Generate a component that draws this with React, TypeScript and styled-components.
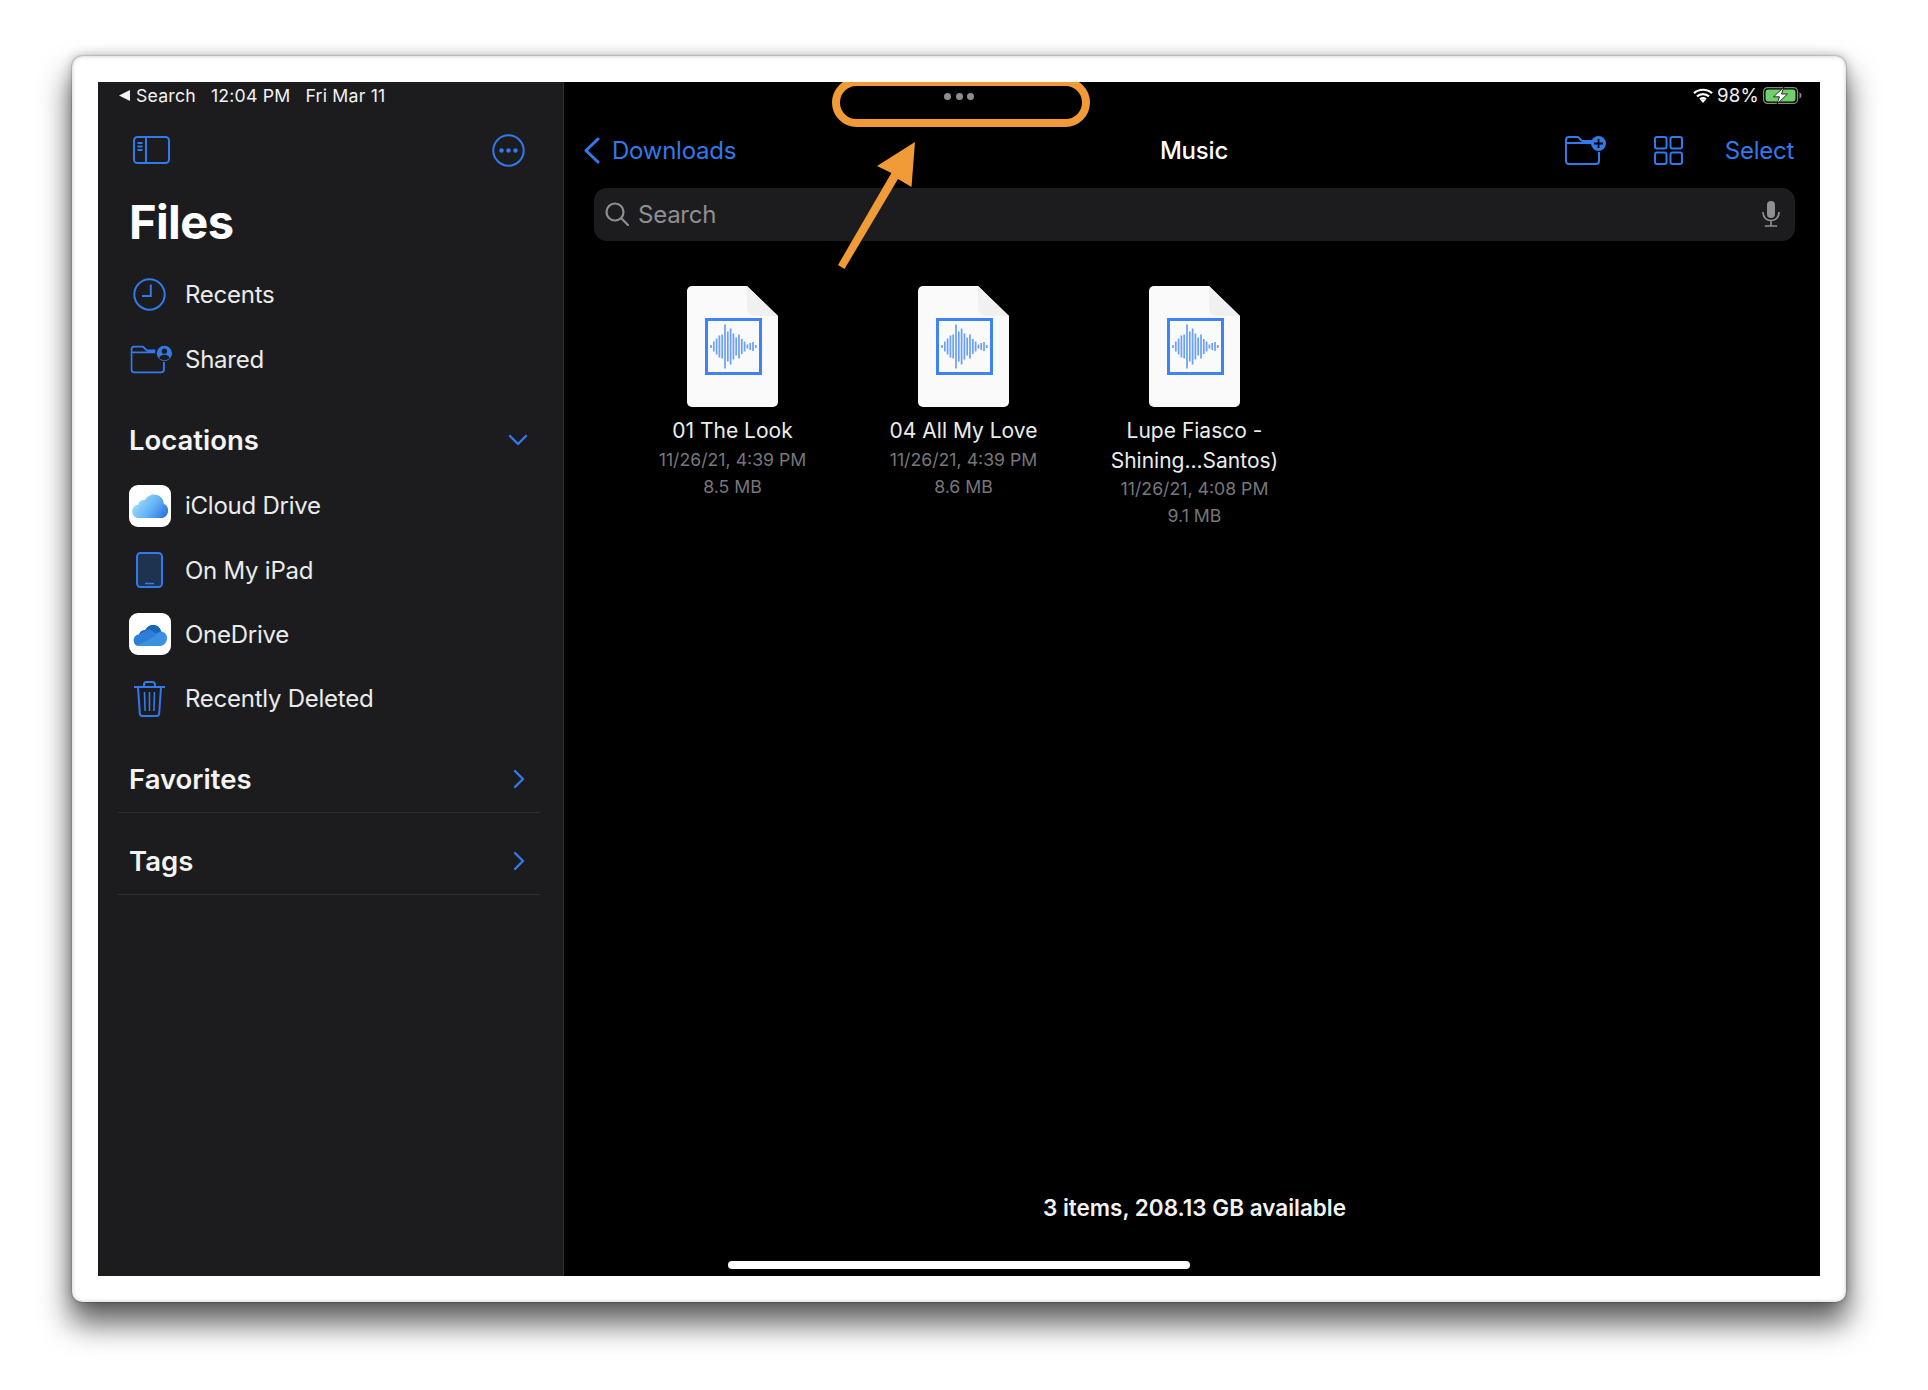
import React from 'react';
import styled, { createGlobalStyle } from 'styled-components';

const BLUE = '#3279ec';
const ORANGE = '#f19a38';

const GlobalStyle = createGlobalStyle`
  html, body {
    margin: 0;
    padding: 0;
    background: #fff;
    font-family: Inter, "Liberation Sans", sans-serif;
  }
`;

const Page = styled.div`
  width: 1928px;
  height: 1390px;
  padding: 56px 0 0 72px;
  box-sizing: border-box;
  overflow: hidden;
`;

const Frame = styled.div`
  width: 1774px;
  height: 1246px;
  padding: 26px;
  box-sizing: border-box;
  background: #fff;
  border-radius: 10px;
  box-shadow: 0 20px 30px 2px rgba(0, 0, 0, 0.62), 0 0 12px rgba(0, 0, 0, 0.25), 0 0 2px rgba(0, 0, 0, 0.45),
    inset 0 0 4px rgba(0, 0, 0, 0.22);
`;

const Screen = styled.div`
  position: relative;
  display: flex;
  width: 1722px;
  height: 1194px;
  overflow: hidden;
  background: #000;
`;

const Sidebar = styled.aside`
  width: 465px;
  flex: none;
  background: #1c1c1e;
  border-right: 1px solid #2e2e30;
`;

const StatusLine = styled.div`
  display: flex;
  align-items: center;
  height: 26px;
  color: #f2f2f2;
  font-size: 17.7px;
  letter-spacing: 0.2px;
`;

const LeftStatus = styled(StatusLine)`
  padding-left: 21px;
  gap: 15px;
`;

const RightStatus = styled(StatusLine)`
  justify-content: flex-end;
  padding-right: 18px;
  gap: 4px;
`;

const Percent = styled.span`
  font-size: 18.6px;
`;

const BackCrumb = styled.span`
  display: flex;
  align-items: center;
  gap: 6px;
`;

const SidebarTools = styled.div`
  display: flex;
  align-items: center;
  justify-content: space-between;
  height: 84px;
  padding: 0 38px 0 35px;
`;

const Title = styled.h1`
  margin: 0;
  height: 60px;
  padding-left: 31px;
  color: #fff;
  font-size: 47px;
  font-weight: 700;
  line-height: 60px;
  letter-spacing: -0.6px;
`;

const RowList = styled.div<{ $top: number }>`
  margin-top: ${p => p.$top}px;
`;

const Row = styled.div`
  display: flex;
  align-items: center;
  height: 64.3px;
  padding-left: 31px;
  gap: 14px;
  color: #ebebeb;
  font-size: 24px;
  letter-spacing: -0.25px;
`;

const IconSlot = styled.span<{ $nudge?: number }>`
  display: flex;
  align-items: center;
  justify-content: center;
  flex: none;
  width: 42px;
  height: 42px;
  transform: translateX(${p => p.$nudge ?? -1}px);
`;

const Tile = styled(IconSlot)`
  background: #fff;
  border-radius: 9px;
  transform: none;
`;

const SectionHead = styled.div`
  display: flex;
  align-items: center;
  justify-content: space-between;
  height: 64px;
  margin-top: 16.4px;
  padding: 0 35px 0 31px;
  color: #f4f4f4;
  font-size: 27.5px;
  font-weight: 600;
`;

const Collapsed = styled.div`
  display: flex;
  align-items: center;
  justify-content: space-between;
  height: 82px;
  box-sizing: border-box;
  margin: 0 23px 0 20px;
  padding: 16px 15px 0 11px;
  border-bottom: 1px solid #2e2e30;
  color: #f4f4f4;
  font-size: 27.5px;
  font-weight: 600;
`;

const Main = styled.main`
  position: relative;
  display: flex;
  flex-direction: column;
  flex: 1;
  min-width: 0;
`;

const NavBar = styled.div`
  display: grid;
  grid-template-columns: 1fr auto 1fr;
  align-items: center;
  height: 80px;
  box-sizing: border-box;
  padding: 4px 26px 0 30px;
`;

const BackLink = styled.div`
  display: flex;
  align-items: center;
  gap: 12px;
  margin-left: -11px;
  color: ${BLUE};
  font-size: 24px;
  letter-spacing: -0.25px;
`;

const NavTitle = styled.div`
  color: #fff;
  font-size: 24px;
  font-weight: 500;
  letter-spacing: -0.2px;
`;

const NavActions = styled.div`
  display: flex;
  align-items: center;
  justify-content: flex-end;
  gap: 42px;
  color: ${BLUE};
  font-size: 24px;
  letter-spacing: -0.25px;
`;

const FolderButton = styled.span`
  display: flex;
  margin-right: 6px;
`;

const SearchBar = styled.div`
  display: flex;
  align-items: center;
  height: 53px;
  margin: 0 25px 0 30px;
  padding: 0 15px 1px 11px;
  gap: 9px;
  box-sizing: border-box;
  background: #1c1c1e;
  border-radius: 13px;
  color: #8e8e93;
  font-size: 24px;
  letter-spacing: -0.25px;
`;

const SearchText = styled.span`
  flex: 1;
`;

const FileGrid = styled.div`
  display: flex;
  align-items: flex-start;
  margin-top: 45px;
  padding-left: 53px;
`;

const FileCell = styled.div`
  display: flex;
  flex-direction: column;
  align-items: center;
  width: 231px;
`;

const FileName = styled.div`
  margin-top: 9px;
  color: #ececec;
  font-size: 21px;
  line-height: 29.5px;
  text-align: center;
`;

const FileMeta = styled.div`
  color: #77777b;
  font-size: 17.7px;
  line-height: 27px;
`;

const Footer = styled.div`
  margin: auto 25px 53px 30px;
  color: #f2f2f2;
  font-size: 22.5px;
  font-weight: 600;
  line-height: 30px;
  text-align: center;
`;

const Grabber = styled.div`
  position: absolute;
  top: -4px;
  left: 734px;
  width: 258px;
  height: 49px;
  box-sizing: border-box;
  border: 8.5px solid ${ORANGE};
  border-radius: 25px;
`;

const Dots = styled.div`
  position: absolute;
  top: 10.5px;
  left: 846px;
  display: flex;
  gap: 4.5px;
`;

const Dot = styled.span`
  width: 7px;
  height: 7px;
  border-radius: 50%;
  background: #8e8e8e;
`;

const Arrow = styled.svg`
  position: absolute;
  top: 50px;
  left: 730px;
`;

const HomeBar = styled.div`
  position: absolute;
  bottom: 7px;
  left: 630px;
  width: 462px;
  height: 8.5px;
  border-radius: 5px;
  background: #fff;
`;

const PanelIcon = () => (
  <svg width="37" height="28" viewBox="0 0 37 28" fill="none" stroke={BLUE} strokeWidth="2">
    <rect x="1" y="1" width="35" height="26" rx="3.5" />
    <path d="M13 1v26M4.5 7h5M4.5 10.5h5M4.500 14h5" />
  </svg>
);

const MoreIcon = () => (
  <svg width="33" height="33" viewBox="0 0 33 33" fill="none">
    <circle cx="16.5" cy="16.5" r="15.2" stroke={BLUE} strokeWidth="2" />
    <circle cx="9.5" cy="16.5" r="2.2" fill={BLUE} />
    <circle cx="16.5" cy="16.5" r="2.2" fill={BLUE} />
    <circle cx="23.5" cy="16.5" r="2.2" fill={BLUE} />
  </svg>
);

const ClockIcon = () => (
  <svg width="33" height="33" viewBox="0 0 33 33" fill="none" stroke={BLUE} strokeWidth="2">
    <circle cx="16.5" cy="16.5" r="15.2" />
    <path d="M17.8 6.5v11.5H9" />
  </svg>
);

const SharedFolderIcon = () => (
  <svg width="44" height="29" viewBox="0 0 44 29" fill="none">
    <path
      d="M1 6.500V4a3 3 0 0 1 3-3h8a3 3 0 0 1 2.200 1l2 2.200c.5.5 1 .8 1.800.8h8M1 7h25M1 6.500V25a3 3 0 0 0 3 3h28a3 3 0 0 0 3-3v-8"
      stroke={BLUE}
      strokeWidth="2"
    />
    <circle cx="35.500" cy="8" r="8" fill={BLUE} />
    <circle cx="35.500" cy="5.800" r="2.800" fill="#1c1c1e" />
    <path d="M30 13c1-2.600 3-3.400 5.500-3.400S40 10.400 41 13c-1.500 1.400-3.300 2.200-5.500 2.200S31.500 14.400 30 13z" fill="#1c1c1e" />
  </svg>
);

const ICloudIcon = () => (
  <svg width="42" height="42" viewBox="0 0 42 42">
    <defs>
      <linearGradient id="icloud-fill" x1="0" y1="0.3" x2="1" y2="0.8">
        <stop offset="0" stopColor="#a5e2fb" />
        <stop offset="0.55" stopColor="#62b2f5" />
        <stop offset="1" stopColor="#2f74e2" />
      </linearGradient>
    </defs>
    <path
      d="M10 33c-4 0-6.800-3-6.800-6.600 0-3.500 2.600-6.200 6-6.600.5-3.400 3.500-5.400 6.700-4.700C17.700 11.800 21 9.500 25 9.500c5.500 0 9.500 4 9.800 9.300 2.600.9 4.300 3.400 4.300 6.600 0 4.300-3 7.600-7 7.600z"
      fill="url(#icloud-fill)"
    />
  </svg>
);

const OneDriveIcon = () => (
  <svg width="42" height="42" viewBox="0 0 42 42">
    <path
      d="M10.500 33C7 33 4.800 30.300 4.800 27.200c0-3 2.200-5.400 5.200-5.700 1-3 3.500-4.500 6.200-4.300C18 13.800 21 12 24 12c4 0 7.300 2.600 8.200 6.600 3.300.3 5.800 2.900 5.800 6.500 0 4.300-3 7.900-6.800 7.900z"
      fill="#3c90e2"
    />
    <path d="M10 21.500c1-3 3.500-4.500 6.200-4.300C18 13.800 21 12 24 12c4 0 7.300 2.600 8.200 6.600l-5.700 2-6-4z" fill="#1a66bf" />
    <path d="M4.800 27.200c0-3 2.200-5.400 5.200-5.700l10.500-5 6 4 5.700-2-12 8-12 6C7 32.500 4.800 30.300 4.800 27.200z" fill="#2c7ed6" />
  </svg>
);

const IPadIcon = () => (
  <svg width="27" height="36" viewBox="0 0 27 36" fill="none">
    <rect x="1" y="1" width="25" height="34" rx="3.500" fill="#1e3350" stroke={BLUE} strokeWidth="2" />
    <path d="M9 31.500h9" stroke={BLUE} strokeWidth="1.500" />
  </svg>
);

const TrashIcon = () => (
  <svg width="31" height="36" viewBox="0 0 31 36" fill="none" stroke={BLUE} strokeWidth="2">
    <path d="M0 6h31M10 5.500V3.500A2.500 2.500 0 0 1 12.500 1h6A2.500 2.500 0 0 1 21 3.500v2" />
    <path d="M4 6l1.800 26.500A2.700 2.700 0 0 0 8.500 35h14a2.700 2.700 0 0 0 2.700-2.500L27 6" />
    <path d="M10.500 11l.6 19M15.500 11v19M20.500 11l-.6 19" strokeWidth="1.600" />
  </svg>
);

const ChevronDown = () => (
  <svg width="20" height="12" viewBox="0 0 20 12" fill="none" stroke={BLUE} strokeWidth="2.400" strokeLinecap="round" strokeLinejoin="round">
    <path d="M2 2l8 8 8-8" />
  </svg>
);

const ChevronRight = () => (
  <svg width="12" height="20" viewBox="0 0 12 20" fill="none" stroke={BLUE} strokeWidth="2.400" strokeLinecap="round" strokeLinejoin="round">
    <path d="M2 2l8 8-8 8" />
  </svg>
);

const BackChevron = () => (
  <svg width="17" height="27" viewBox="0 0 17 27" fill="none" stroke={BLUE} strokeWidth="3" strokeLinecap="round" strokeLinejoin="round">
    <path d="M15 2L3 13.500 15 25" />
  </svg>
);

const NewFolderIcon = () => (
  <svg width="41" height="29" viewBox="0 0 41 29" fill="none">
    <path
      d="M1 6.500V4a3 3 0 0 1 3-3h8a3 3 0 0 1 2.200 1l2 2.200c.5.5 1 .8 1.800.8h9M1 7h26M1 6.500V25a3 3 0 0 0 3 3h27a3 3 0 0 0 3-3v-9"
      stroke={BLUE}
      strokeWidth="2"
    />
    <circle cx="33.500" cy="7.500" r="7.500" fill={BLUE} />
    <path d="M33.500 3v9M29 7.500h9" stroke="#000" strokeWidth="1.800" />
  </svg>
);

const GridIcon = () => (
  <svg width="29" height="29" viewBox="0 0 29 29" fill="none" stroke={BLUE} strokeWidth="2">
    <rect x="1" y="1" width="11.500" height="11.500" rx="2" />
    <rect x="16.500" y="1" width="11.500" height="11.500" rx="2" />
    <rect x="1" y="16.500" width="11.500" height="11.500" rx="2" />
    <rect x="16.500" y="16.500" width="11.500" height="11.500" rx="2" />
  </svg>
);

const SearchIcon = () => (
  <svg width="24" height="24" viewBox="0 0 24 24" fill="none" stroke="#8e8e93" strokeWidth="2.200" strokeLinecap="round">
    <circle cx="10" cy="10" r="8.500" />
    <path d="M16.500 16.500L23 23" />
  </svg>
);

const MicIcon = () => (
  <svg width="18" height="26" viewBox="0 0 18 26" fill="none">
    <rect x="5" y="0" width="8" height="17" rx="4" fill="#8e8e93" />
    <path d="M1 11.500c0 5 3.500 8 8 8s8-3 8-8M9 19.500v5M3.500 25h11" stroke="#8e8e93" strokeWidth="1.700" strokeLinecap="round" />
  </svg>
);

const WifiIcon = () => (
  <svg width="20" height="15" viewBox="0 0 20 15" fill="none" stroke="#fff" strokeWidth="2.200">
    <path d="M1 5.200C6 .6 14 .6 19 5.200M4 8.400c3.400-3 8.600-3 12 0M7 11.400c1.800-1.400 4.200-1.400 6 0" />
    <path d="M10 15l-2.400-3c1.400-.9 3.400-.9 4.800 0z" fill="#fff" stroke="none" />
  </svg>
);

const BatteryIcon = () => (
  <svg width="39" height="17" viewBox="0 0 39 17">
    <rect x="0.600" y="0.600" width="34" height="15.800" rx="4" fill="none" stroke="#8a8a8a" strokeWidth="1.200" />
    <rect x="2.500" y="2.500" width="30" height="12" rx="2.400" fill="#6fd06c" />
    <path d="M36.500 5.500c1.200.4 2 1.500 2 3s-.8 2.600-2 3z" fill="#8a8a8a" />
    <path d="M21 0L10.500 9.800h6L14 17 24.500 7h-6z" fill="#fff" stroke="#000" strokeWidth="0.800" />
  </svg>
);

const BACK_TRIANGLE = (
  <svg width="11" height="11" viewBox="0 0 11 11">
    <path d="M0 5.500L11 0v11z" fill="#f2f2f2" />
  </svg>
);

const WAVE = [3, 10, 16, 22, 24, 44, 30, 36, 26, 18, 24, 15, 10, 4, 7, 9, 3];

const AudioDoc = () => (
  <svg width="91" height="121" viewBox="0 0 91 121">
    <path d="M5 0H60L91 30V116a5 5 0 0 1-5 5H5a5 5 0 0 1-5-5V5a5 5 0 0 1 5-5z" fill="#fafafa" />
    <path d="M60 0V22a8 8 0 0 0 8 8H91z" fill="#f0f0f0" />
    <rect x="19.500" y="33.500" width="54" height="54" fill="none" stroke="#3d82f6" strokeWidth="3" />
    {WAVE.map((h, i) => (
      <rect key={i} x={24 + i * 2.8 - 0.85} y={60.5 - h / 2} width="1.700" height={h} fill="#6aa0fa" />
    ))}
  </svg>
);

const files = [
  { name: ['01 The Look'], date: '11/26/21, 4:39 PM', size: '8.5 MB' },
  { name: ['04 All My Love'], date: '11/26/21, 4:39 PM', size: '8.6 MB' },
  { name: ['Lupe Fiasco -', 'Shining...Santos)'], date: '11/26/21, 4:08 PM', size: '9.1 MB' },
];

export default function App() {
  return (
    <Page>
      <GlobalStyle />
      <Frame>
        <Screen>
          <Sidebar>
            <LeftStatus>
              <BackCrumb>{BACK_TRIANGLE}Search</BackCrumb>
              <span>12:04 PM</span>
              <span>Fri Mar 11</span>
            </LeftStatus>
            <SidebarTools>
              <PanelIcon />
              <MoreIcon />
            </SidebarTools>
            <Title>Files</Title>
            <RowList $top={10.75}>
              <Row><IconSlot><ClockIcon /></IconSlot>Recents</Row>
              <Row><IconSlot $nudge={1.5}><SharedFolderIcon /></IconSlot>Shared</Row>
            </RowList>
            <SectionHead>Locations<ChevronDown /></SectionHead>
            <RowList $top={2}>
              <Row><Tile><ICloudIcon /></Tile>iCloud Drive</Row>
              <Row><IconSlot><IPadIcon /></IconSlot>On My iPad</Row>
              <Row><Tile><OneDriveIcon /></Tile>OneDrive</Row>
              <Row><IconSlot><TrashIcon /></IconSlot>Recently Deleted</Row>
            </RowList>
            <Collapsed>Favorites<ChevronRight /></Collapsed>
            <Collapsed>Tags<ChevronRight /></Collapsed>
          </Sidebar>
          <Main>
            <RightStatus>
              <WifiIcon />
              <Percent>98%</Percent>
              <BatteryIcon />
            </RightStatus>
            <NavBar>
              <BackLink><BackChevron />Downloads</BackLink>
              <NavTitle>Music</NavTitle>
              <NavActions>
                <FolderButton><NewFolderIcon /></FolderButton>
                <GridIcon />
                <span>Select</span>
              </NavActions>
            </NavBar>
            <SearchBar>
              <SearchIcon />
              <SearchText>Search</SearchText>
              <MicIcon />
            </SearchBar>
            <FileGrid>
              {files.map(f => (
                <FileCell key={f.date + f.size}>
                  <AudioDoc />
                  <FileName>
                    {f.name.map(line => <div key={line}>{line}</div>)}
                  </FileName>
                  <FileMeta>{f.date}</FileMeta>
                  <FileMeta>{f.size}</FileMeta>
                </FileCell>
              ))}
            </FileGrid>
            <Footer>3 items, 208.13 GB available</Footer>
          </Main>
          <Grabber />
          <Dots><Dot /><Dot /><Dot /></Dots>
          <Arrow width="100" height="150" viewBox="0 0 100 150">
            <path d="M87 10L49 34 63.400 41 10 133 16.500 137 70 47 83.500 55z" fill={ORANGE} />
          </Arrow>
          <HomeBar />
        </Screen>
      </Frame>
    </Page>
  );
}
